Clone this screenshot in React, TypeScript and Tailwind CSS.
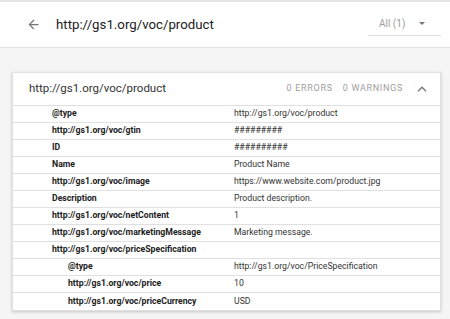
import React from 'react';

const rows = [
  { key: '@type', value: 'http://gs1.org/voc/product' },
  { key: 'http://gs1.org/voc/gtin', value: '#########' },
  { key: 'ID', value: '##########' },
  { key: 'Name', value: 'Product Name' },
  { key: 'http://gs1.org/voc/image', value: 'https://www.website.com/product.jpg' },
  { key: 'Description', value: 'Product description.' },
  { key: 'http://gs1.org/voc/netContent', value: '1' },
  { key: 'http://gs1.org/voc/marketingMessage', value: 'Marketing message.' },
  { key: 'http://gs1.org/voc/priceSpecification', value: '' },
  { key: '@type', value: 'http://gs1.org/voc/PriceSpecification', nested: true },
  { key: 'http://gs1.org/voc/price', value: '10', nested: true },
  { key: 'http://gs1.org/voc/priceCurrency', value: 'USD', nested: true },
];

export default function App() {
  return (
    <div className="w-[450px] h-[319px] overflow-hidden bg-[#f5f5f5] font-['Roboto',sans-serif]">
      <header className="h-[48px] bg-white border-t-2 border-t-[#e6e6e6] border-b border-b-[#e0e0e0] flex items-center pl-[26px] pr-[9px]">
        <svg width="15" height="15" viewBox="0 0 24 24" fill="#757575">
          <path d="M20 11H7.83l5.59-5.59L12 4l-8 8 8 8 1.41-1.41L7.83 13H20v-2z" />
        </svg>
        <span className="ml-[15px] text-[13.25px] text-[#212121]">http://gs1.org/voc/product</span>
        <div className="ml-auto -mt-[2px] w-[73px] h-[24px] border-b border-[#e0e0e0] flex items-center pl-[11px] pr-[16px]">
          <span className="text-[10px] text-[#9e9e9e]">All (1)</span>
          <span className="ml-auto w-0 h-0 border-l-[3px] border-r-[3px] border-t-[3px] border-l-transparent border-r-transparent border-t-[#757575]" />
        </div>
      </header>

      <div className="mt-[24px] ml-[12px] w-[429px] bg-white border border-[#e0e0e0] shadow-[0_1px_3px_rgba(0,0,0,0.2)]">
        <div className="h-[33px] border-b border-[#e0e0e0] flex items-center pl-[16px] pr-[13px]">
          <span className="text-[11.5px] text-[#333]">http://gs1.org/voc/product</span>
          <span className="ml-auto text-[9px] tracking-[0.7px] text-[#9e9e9e]">0 ERRORS</span>
          <span className="ml-[10px] text-[9px] tracking-[0.7px] text-[#9e9e9e]">0 WARNINGS</span>
          <svg className="ml-[14px]" width="10" height="6" viewBox="0 0 10 6" fill="none">
            <polyline points="1,5.2 5,1.2 9,5.2" stroke="#757575" strokeWidth="1.3" />
          </svg>
        </div>
        {rows.map((r, i) => (
          <div
            key={i}
            className={`h-[17px] flex items-center text-[8.7px] ${i < rows.length - 1 ? 'border-b border-[#e0e0e0]' : ''}`}
          >
            <div className={`w-[221px] font-bold text-[#212121] ${r.nested ? 'pl-[55px]' : 'pl-[39px]'}`}>{r.key}</div>
            <div className="text-[#333]">{r.value}</div>
          </div>
        ))}
      </div>
    </div>
  );
}
